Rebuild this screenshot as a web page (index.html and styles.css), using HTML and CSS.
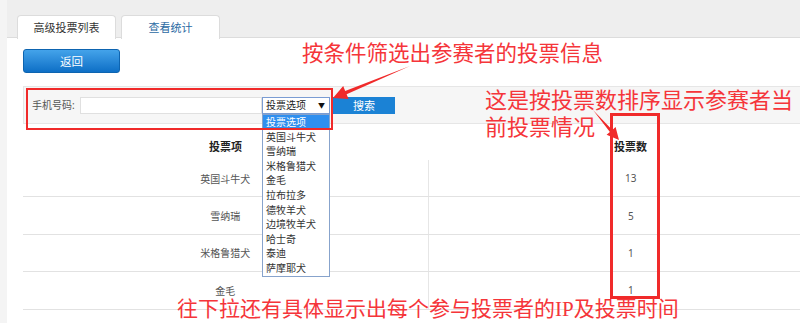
FILE: index.html
```html
<!DOCTYPE html>
<html lang="zh-CN">
<head>
  <meta charset="UTF-8" />
  <title>查看统计</title>
  <link rel="stylesheet" href="styles.css">
</head>
<body>
  <div class="wrap">
    <div class="tabs">
      <div class="tab">高级投票列表</div>
      <div class="tab active">查看统计</div>
    </div>
    <div class="main">
      <button class="btn-back">返回</button>
      <div class="filter">
        <label>手机号码:</label>
        <input class="phone" type="text" />
        <div class="select">投票选项<span class="caret">▼</span></div>
        <button class="btn-search">搜索</button>
      </div>
      <table class="stats">
        <thead>
          <tr><th>投票项</th><th>投票数</th></tr>
        </thead>
        <tbody>
          <tr><td>英国斗牛犬</td><td>13</td></tr>
          <tr><td>雪纳瑞</td><td>5</td></tr>
          <tr><td>米格鲁猎犬</td><td>1</td></tr>
          <tr><td>金毛</td><td>1</td></tr>
        </tbody>
      </table>
    </div>
  </div>

  <ul class="options">
    <li class="on">投票选项</li>
    <li>英国斗牛犬</li>
    <li>雪纳瑞</li>
    <li>米格鲁猎犬</li>
    <li>金毛</li>
    <li>拉布拉多</li>
    <li>德牧羊犬</li>
    <li>边境牧羊犬</li>
    <li>哈士奇</li>
    <li>泰迪</li>
    <li>萨摩耶犬</li>
  </ul>

  <!-- annotations -->
  <div class="mark box-filter"></div>
  <div class="mark box-count"></div>
  <svg class="arrows" width="800" height="323" viewBox="0 0 800 323">
    <polygon points="410,66 345.2,90.9 343.2,86.1 333,98 348.6,99.1 346.6,94.3" />
    <polygon points="593,110 609.9,131.9 606.6,134.8 619,140 615.6,127 612.3,129.9" />
  </svg>
  <div class="note note-filter">按条件筛选出参赛者的投票信息</div>
  <div class="note note-count">这是按投票数排序显示参赛者当前投票情况</div>
  <div class="note note-more">往下拉还有具体显示出每个参与投票者的<span class="latin">IP</span>及投票时间</div>
</body>
</html>
```

FILE: styles.css
```css
body {
  margin: 0;
  background: #f4f4f4;
  font-family: "Noto Sans", "Noto Sans CJK SC", sans-serif;
  font-size: 10px;
  color: #333;
  overflow: hidden;
  height: 323px;
  position: relative;
}
.wrap {
  margin-left: 7px;
  background: #fff;
  min-height: 323px;
}
.tabs {
  display: flex;
  gap: 5px;
  padding: 15px 0 0 10px;
  background: #eeeeee;
  border-bottom: 1px solid #dcdcdc;
  height: 22px;
}
.tab {
  width: 97px;
  height: 23px;
  line-height: 23px;
  text-align: center;
  font-size: 11px;
  background: #fff;
  border: 1px solid #dcdcdc;
  border-bottom: none;
  border-radius: 4px 4px 0 0;
  color: #333;
}
.tab.active {
  color: #2b6aa3;
}
.main {
  padding: 11px 0 0 16px;
}
.btn-back {
  display: block;
  width: 97px;
  height: 24px;
  border: 1px solid #0d64b0;
  border-radius: 3px;
  background: linear-gradient(#44a3ea, #0e6fc6);
  color: #fff;
  font-family: inherit;
  font-size: 11.5px;
  padding: 0;
}
.filter {
  margin-top: 13px;
  height: 38px;
  background: #f6f6f6;
  border: 1px solid #e6e6e6;
  border-right: none;
  display: flex;
  align-items: flex-start;
  padding: 10px 0 0 8px;
  box-sizing: border-box;
}
.filter label {
  width: 48px;
  flex: none;
  line-height: 17px;
  color: #555;
}
.phone {
  flex: none;
  width: 182px;
  height: 17px;
  box-sizing: border-box;
  margin: 0;
  border: 1px solid #e0e0e0;
  background: #fff;
}
.select {
  flex: none;
  width: 68px;
  height: 17px;
  box-sizing: border-box;
  border: 1px solid #7a9cd3;
  background: #fff;
  line-height: 15px;
  padding-left: 3px;
  position: relative;
  color: #222;
}
.caret {
  position: absolute;
  right: 4px;
  top: 0;
  font-size: 7px;
  color: #111;
}
.btn-search {
  flex: none;
  margin-left: 3px;
  width: 62px;
  height: 17px;
  padding: 0;
  border: none;
  background: #1b82d5;
  color: #fff;
  font-family: inherit;
  font-size: 11px;
  line-height: 17px;
}
.stats {
  margin-top: 5px;
  width: 810px;
  table-layout: fixed;
  border-collapse: collapse;
}
.stats th {
  height: 31px;
  padding: 2px 0 0;
  box-sizing: border-box;
  font-size: 11px;
  font-weight: bold;
  color: #222;
}
.stats td {
  height: 36.4px;
  padding: 0;
  text-align: center;
  color: #555;
  border-bottom: 1px solid #e2e2e2;
}
.stats td + td {
  border-left: 1px solid #e6e6e6;
}
.options {
  position: absolute;
  left: 262px;
  top: 114px;
  width: 66px;
  margin: 0;
  padding: 0;
  list-style: none;
  background: #fff;
  border: 1px solid #87a3cc;
}
.options li {
  height: 14.6px;
  line-height: 14.6px;
  padding-left: 3px;
  color: #333;
  white-space: nowrap;
}
.options li.on {
  background: #2f8fef;
  color: #fff;
}
.mark {
  position: absolute;
  border: 2px solid #f02a2a;
}
.box-filter {
  left: 26px;
  top: 88px;
  width: 303px;
  height: 38px;
}
.box-count {
  left: 610px;
  top: 113px;
  width: 44px;
  height: 180px;
  border-width: 3px;
}
.arrows {
  position: absolute;
  left: 0;
  top: 0;
}
.arrows polygon {
  fill: #f02a2a;
}
.note {
  position: absolute;
  color: #f5353a;
  font-size: 21.5px;
  line-height: 27px;
  white-space: nowrap;
}
.note-filter {
  left: 302px;
  top: 39px;
}
.note-count {
  left: 485px;
  top: 86px;
  width: 312px;
  white-space: normal;
  font-size: 22px;
}
.note-more {
  left: 177px;
  top: 295px;
  font-size: 21px;
}
.latin {
  font-family: "Liberation Serif", serif;
}
```
